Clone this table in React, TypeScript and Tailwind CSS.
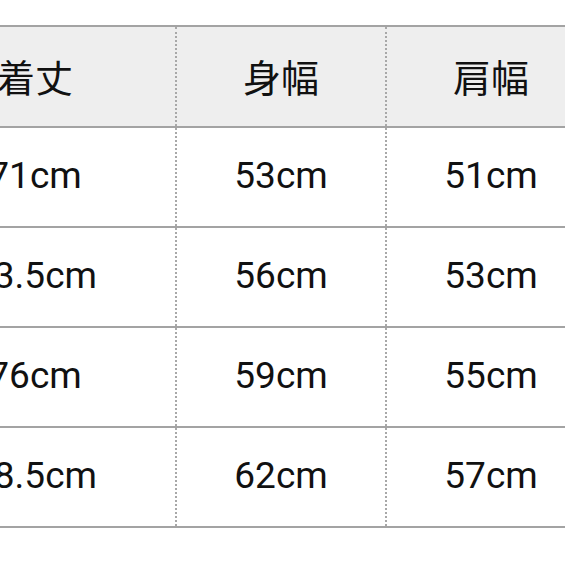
const headers = ['着丈', '身幅', '肩幅']

const rows = [
  ['71cm', '53cm', '51cm'],
  ['73.5cm', '56cm', '53cm'],
  ['76cm', '59cm', '55cm'],
  ['78.5cm', '62cm', '57cm'],
]

export default function App() {
  return (
    <div className="w-[565px] h-[565px] overflow-hidden bg-white">
      <div className="mt-[25px] ml-[-105px] w-[700px] border-t-2 border-[#a3a3a3]">
        {/* 表头 */}
        <div className="grid grid-cols-[280px_210px_210px] h-[101px] bg-[#eeeeee] border-b-2 border-[#a3a3a3]">
          {headers.map((h, i) => (
            <div
              key={h}
              className={
                'flex items-center justify-center pb-[2px] text-[38px] text-[#111] font-["Noto_Sans_CJK_JP",sans-serif] ' +
                (i > 0 ? 'border-l-2 border-dotted border-[#a8a8a8]' : '')
              }
            >
              {h}
            </div>
          ))}
        </div>
        {/* 数据行 */}
        {rows.map((row, r) => (
          <div
            key={r}
            className="grid grid-cols-[280px_210px_210px] h-[100px] border-b-2 border-[#a3a3a3]"
          >
            {row.map((v, i) => (
              <div
                key={i}
                className={
                  'flex items-center justify-center pb-[2px] text-[37px] text-[#111] font-["Roboto",sans-serif] ' +
                  (i > 0 ? 'border-l-2 border-dotted border-[#a8a8a8]' : '')
                }
              >
                {v}
              </div>
            ))}
          </div>
        ))}
      </div>
    </div>
  )
}
